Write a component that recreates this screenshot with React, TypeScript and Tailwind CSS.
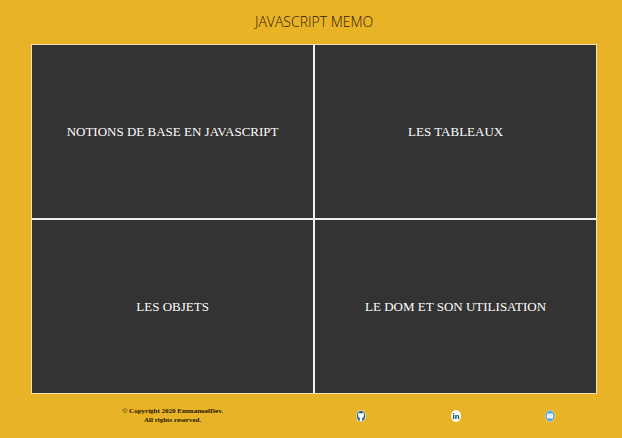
const topics = [
  "NOTIONS DE BASE EN JAVASCRIPT",
  "LES TABLEAUX",
  "LES OBJETS",
  "LE DOM ET SON UTILISATION",
];

function GithubIcon() {
  return (
    <svg viewBox="0 0 10 12" className="h-3 w-2.5" aria-hidden="true">
      <ellipse cx="5" cy="6" rx="5" ry="6" fill="#e9e6cf" />
      <ellipse cx="5" cy="6" rx="4.2" ry="5.2" fill="#2f5f7d" />
      <path
        d="M2.4 2.6 L4 3.2 H6 L7.6 2.6 L8 5.6 C8 7.2 7.2 7.9 6.2 8.1 V11 H3.8 V8.1 C2.8 7.9 2 7.2 2 5.6 Z"
        fill="#f4fafc"
      />
    </svg>
  );
}

function LinkedinIcon() {
  return (
    <svg viewBox="0 0 10 12" className="h-3 w-2.5" aria-hidden="true">
      <ellipse cx="5" cy="6" rx="5" ry="6" fill="#fdfdf8" />
      <path
        d="M2 5 H3.3 V9 H2 Z M2 3 H3.3 V4.2 H2 Z M4.2 5 H5.4 V5.6 C6.4 4.5 8.1 4.9 8.1 6.6 V9 H6.8 V6.9 C6.8 5.8 5.5 5.9 5.5 6.9 V9 H4.2 Z"
        fill="#17597f"
      />
    </svg>
  );
}

function MailIcon() {
  return (
    <svg viewBox="0 0 10 12" className="h-3 w-2.5" aria-hidden="true">
      <ellipse cx="5" cy="6" rx="5" ry="6" fill="#d5d8b4" />
      <ellipse cx="5" cy="6" rx="4.4" ry="5.4" fill="#5fa6d6" />
      <rect x="2" y="3.6" width="6" height="4.8" fill="#f1faff" />
      <path d="M2.4 4.2 L5 6.4 L7.6 4.2" fill="none" stroke="#9ccbe8" strokeWidth="0.6" />
    </svg>
  );
}

const links = [
  { label: "GitHub", Icon: GithubIcon },
  { label: "LinkedIn", Icon: LinkedinIcon },
  { label: "E-mail", Icon: MailIcon },
];

export default function App() {
  return (
    <div className="flex min-h-screen flex-col bg-[#e9b327] pr-[4%] pl-[5%] font-['Liberation_Serif',serif]">
      <header className="flex h-11 items-center justify-center">
        <h1 className="font-['Open_Sans',sans-serif] text-sm font-light text-[#2b2005]">
          JAVASCRIPT MEMO
        </h1>
      </header>
      <main className="grid flex-1 grid-cols-2 grid-rows-2 gap-0.5 border border-[#f3e3b0] bg-[#eeeeee]">
        {topics.map((topic) => (
          <a
            key={topic}
            href="#"
            className="flex items-center justify-center bg-[#333333] text-center text-[13px] text-white"
          >
            {topic}
          </a>
        ))}
      </main>
      <footer className="grid h-11 grid-cols-2 items-center">
        <p className="text-center text-[7px] leading-[9px] font-bold text-[#1d1503]">
          © Copyright 2020 EmmanuelDev.
          <br />
          All rights reserved.
        </p>
        <nav className="grid grid-cols-3 justify-items-center">
          {links.map(({ label, Icon }) => (
            <a key={label} href="#" aria-label={label}>
              <Icon />
            </a>
          ))}
        </nav>
      </footer>
    </div>
  );
}
